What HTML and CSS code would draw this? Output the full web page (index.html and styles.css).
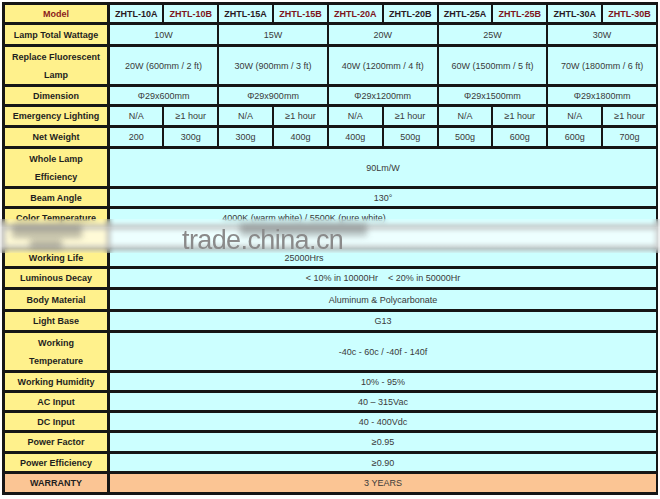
FILE: index.html
```html
<!DOCTYPE html>
<html>
<head>
<meta charset="utf-8">
<link rel="stylesheet" href="styles.css">
</head>
<body>
<div class="sheet">
<table class="spec">
  <colgroup>
    <col class="c-label">
    <col><col><col><col><col><col><col><col><col><col>
  </colgroup>
  <tr class="h20 head">
    <td class="lbl model">Model</td>
    <td class="ma">ZHTL-10A</td><td class="mb">ZHTL-10B</td>
    <td class="ma">ZHTL-15A</td><td class="mb">ZHTL-15B</td>
    <td class="mb">ZHTL-20A</td><td class="ma">ZHTL-20B</td>
    <td class="ma">ZHTL-25A</td><td class="mb">ZHTL-25B</td>
    <td class="ma">ZHTL-30A</td><td class="mb">ZHTL-30B</td>
  </tr>
  <tr class="h22">
    <td class="lbl">Lamp Total Wattage</td>
    <td colspan="2">10W</td><td colspan="2">15W</td><td colspan="2">20W</td><td colspan="2">25W</td><td colspan="2">30W</td>
  </tr>
  <tr class="h40">
    <td class="lbl two">Replace Fluorescent<br>Lamp</td>
    <td colspan="2">20W (600mm / 2 ft)</td><td colspan="2">30W (900mm / 3 ft)</td><td colspan="2">40W (1200mm / 4 ft)</td><td colspan="2">60W (1500mm / 5 ft)</td><td colspan="2">70W (1800mm / 6 ft)</td>
  </tr>
  <tr class="h20">
    <td class="lbl">Dimension</td>
    <td colspan="2">Φ29x600mm</td><td colspan="2">Φ29x900mm</td><td colspan="2">Φ29x1200mm</td><td colspan="2">Φ29x1500mm</td><td colspan="2">Φ29x1800mm</td>
  </tr>
  <tr class="h21">
    <td class="lbl">Emergency Lighting</td>
    <td>N/A</td><td>≥1 hour</td><td>N/A</td><td>≥1 hour</td><td>N/A</td><td>≥1 hour</td><td>N/A</td><td>≥1 hour</td><td>N/A</td><td>≥1 hour</td>
  </tr>
  <tr class="h21">
    <td class="lbl">Net Weight</td>
    <td>200</td><td>300g</td><td>300g</td><td>400g</td><td>400g</td><td>500g</td><td>500g</td><td>600g</td><td>600g</td><td>700g</td>
  </tr>
  <tr class="h40">
    <td class="lbl two">Whole Lamp<br>Efficiency</td>
    <td colspan="10">90Lm/W</td>
  </tr>
  <tr class="h20">
    <td class="lbl">Beam Angle</td>
    <td colspan="10">130°</td>
  </tr>
  <tr class="h20">
    <td class="lbl">Color Temperature</td>
    <td colspan="10" class="shift">4000K (warm white) / 5500K (pure white)</td>
  </tr>
  <tr class="h20">
    <td class="lbl"></td>
    <td colspan="10" class="shift"></td>
  </tr>
  <tr class="h20">
    <td class="lbl">Working Life</td>
    <td colspan="10" class="shift">25000Hrs</td>
  </tr>
  <tr class="h21">
    <td class="lbl">Luminous Decay</td>
    <td colspan="10">&lt; 10% in 10000Hr &nbsp;&nbsp; &lt; 20% in 50000Hr</td>
  </tr>
  <tr class="h22">
    <td class="lbl">Body Material</td>
    <td colspan="10">Aluminum &amp; Polycarbonate</td>
  </tr>
  <tr class="h21">
    <td class="lbl">Light Base</td>
    <td colspan="10">G13</td>
  </tr>
  <tr class="h40">
    <td class="lbl two">Working<br>Temperature</td>
    <td colspan="10">-40c - 60c / -40f - 140f</td>
  </tr>
  <tr class="h20">
    <td class="lbl">Working Humidity</td>
    <td colspan="10">10% - 95%</td>
  </tr>
  <tr class="h20">
    <td class="lbl">AC Input</td>
    <td colspan="10">40 – 315Vac</td>
  </tr>
  <tr class="h20">
    <td class="lbl">DC Input</td>
    <td colspan="10">40 - 400Vdc</td>
  </tr>
  <tr class="h21">
    <td class="lbl">Power Factor</td>
    <td colspan="10">≥0.95</td>
  </tr>
  <tr class="h20">
    <td class="lbl">Power Efficiency</td>
    <td colspan="10">≥0.90</td>
  </tr>
  <tr class="h21 warranty">
    <td class="lbl">WARRANTY</td>
    <td colspan="10">3 YEARS</td>
  </tr>
</table>
<div class="watermark">
  <div class="blob blob-a"></div>
  <div class="blob blob-b"></div>
  <div class="blob blob-c"></div>
  <span class="wm-text">trade.china.cn</span>
</div>
</div>
</body>
</html>
```
FILE: styles.css
```css
html, body {
  margin: 0;
  padding: 0;
  background: #ffffff;
}
.sheet {
  position: relative;
  width: 660px;
  height: 499px;
  padding: 2px 0 0 2px;
  box-sizing: border-box;
}
.spec {
  border-collapse: collapse;
  table-layout: fixed;
  width: 656px;
  font-family: "Liberation Sans", Arial, sans-serif;
  font-size: 9px;
  color: #3a3a3a;
}
.c-label { width: 105px; }
.spec td {
  border-top: 3px solid #161616;
  border-bottom: 3px solid #161616;
  border-left: 2px solid #161616;
  border-right: 2px solid #161616;
  background: #ccffff;
  text-align: center;
  vertical-align: middle;
  padding: 0;
  line-height: 12px;
  white-space: nowrap;
  overflow: hidden;
}
.spec td.two { line-height: 18px; }
.spec td.lbl {
  background: #fff18c;
  font-weight: bold;
  color: #1e1e1e;
  border-left-width: 3px;
  border-right-width: 3px;
}
.spec td.model { color: #8b1c1c; }
.head td { font-weight: bold; }
.head td.ma { color: #2a1a24; }
.head td.mb { color: #7d1420; }
.h20 { height: 20px; }
.h21 { height: 21px; }
.h22 { height: 22px; }
.h40 { height: 40px; }
.spec td.shift { padding-right: 158px; }
.warranty td, .spec .warranty td.lbl { background: #fbc594; }

.watermark {
  position: absolute;
  left: 0;
  top: 219px;
  width: 660px;
  height: 34px;
  background: linear-gradient(to bottom, rgba(255,255,255,0.2) 0%, rgba(255,255,255,0.65) 25%, rgba(255,255,255,0.65) 80%, rgba(255,255,255,0.2) 100%);
  backdrop-filter: blur(2.5px);
}
.blob {
  position: absolute;
  background: rgba(90, 90, 90, 0.4);
  filter: blur(3px);
}
.blob-a { left: 12px; top: 5px; width: 70px; height: 14px; }
.blob-b { left: 30px; top: 20px; width: 32px; height: 10px; }
.blob-c { left: 240px; top: 4px; width: 127px; height: 13px; }
.wm-text {
  position: absolute;
  left: 182px;
  top: 8px;
  font-family: "Liberation Sans", Arial, sans-serif;
  font-size: 27px;
  line-height: 27px;
  color: #8a8a8a;
  letter-spacing: -0.6px;
}
```
